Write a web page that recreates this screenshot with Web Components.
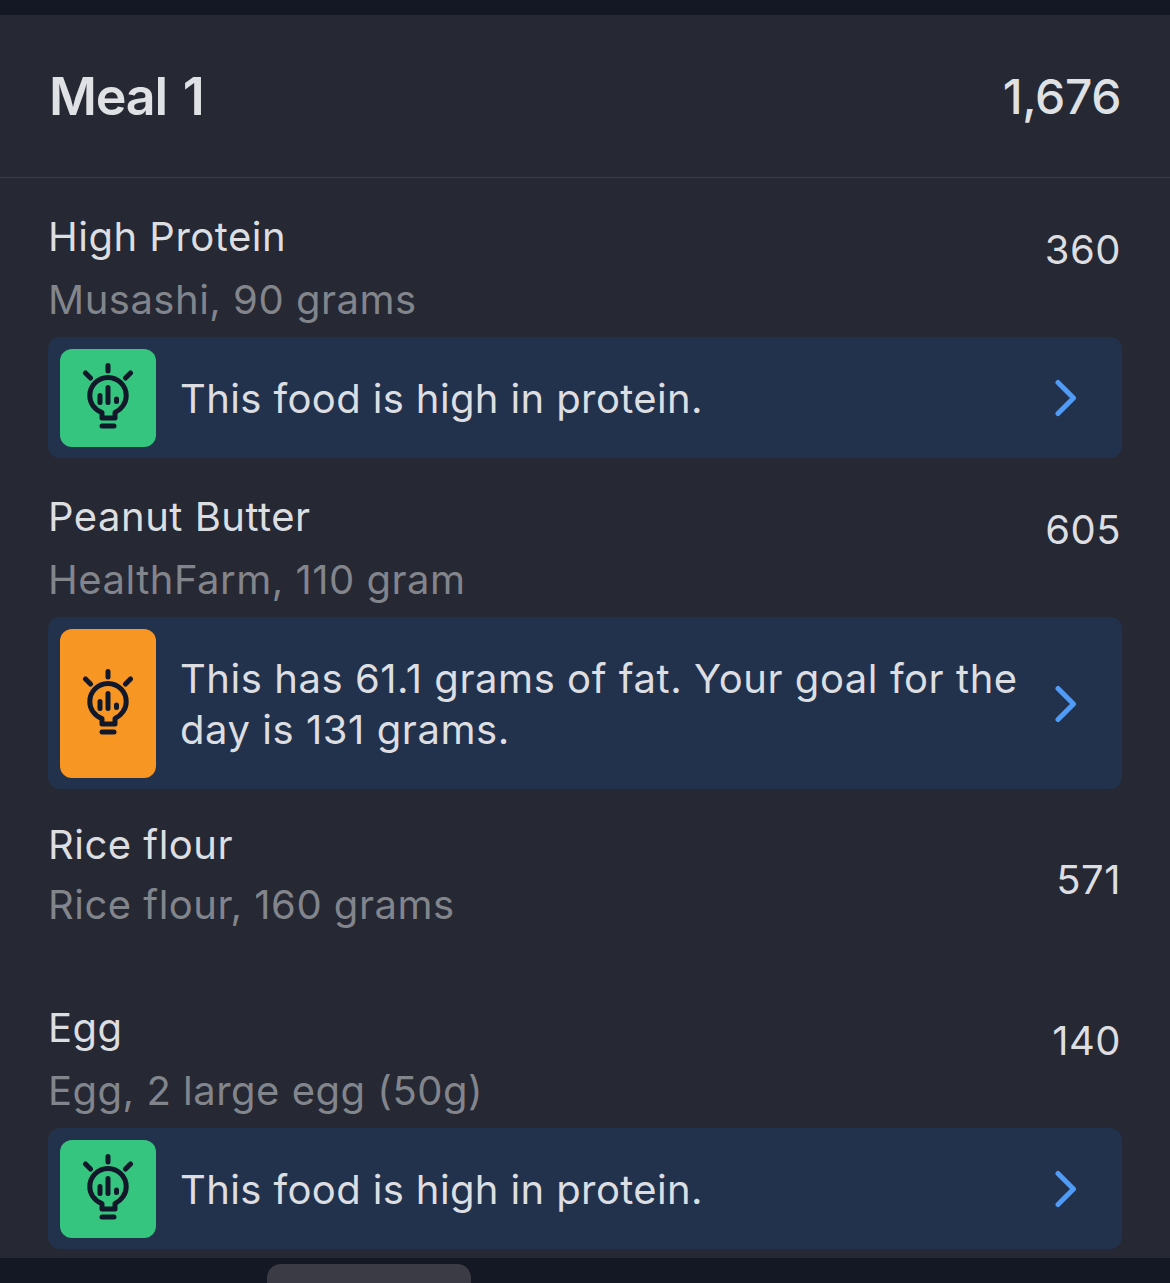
<!DOCTYPE html>
<html>
<head>
<meta charset="utf-8">
<style>
    html,body{margin:0;padding:0;background:#141824;}
    body{font-family:Inter,"Liberation Sans",sans-serif;width:1170px;height:1283px;overflow:hidden;}
</style>
</head>
<body>
<meal-screen>
    <meal-header slot="header" name="Meal 1" total="1,676"></meal-header>
    <food-row name="High Protein" detail="Musashi, 90 grams" cals="360">
        <tip-box kind="green" style="--ls:.38px">This food is high in protein.</tip-box>
    </food-row>
    <food-row name="Peanut Butter" detail="HealthFarm, 110 gram" cals="605" style="--top:30px">
        <tip-box kind="orange">This has 61.1 grams of fat. Your goal for the day is 131 grams.</tip-box>
    </food-row>
    <food-row name="Rice flour" detail="Rice flour, 160 grams" cals="571" plain></food-row>
    <food-row name="Egg" detail="Egg, 2 large egg (50g)" cals="140">
        <tip-box kind="green" style="--ls:.38px">This food is high in protein.</tip-box>
    </food-row>
</meal-screen>
<script>
class MealScreen extends HTMLElement{
    constructor(){
        super()
        this.attachShadow({mode:'open'})
        this.shadowRoot.innerHTML = `
        <style>
            :host{display:flex;flex-direction:column;height:1283px;}
            .top{height:15px;background:#141824;flex:none;}
            .panel{height:1243px;background:#262833;flex:none;overflow:hidden;}
            .bottom{flex:1;background:#141824;display:flex;align-items:flex-start;padding:6px 0 0 267px;}
            .pill{width:204px;height:40px;background:#3a3b45;border-radius:14px;}
        </style>
        <div class="top"></div>
        <div class="panel">
            <slot name="header"></slot>
            <slot></slot>
        </div>
        <div class="bottom"><div class="pill"></div></div>`
    }
}

class MealHeader extends HTMLElement{
    constructor(){
        super()
        this.attachShadow({mode:'open'})
        this.shadowRoot.innerHTML = `
        <style>
            :host{display:flex;justify-content:space-between;align-items:center;height:162px;padding:0 49px;border-bottom:1px solid #3b3d47;color:#dfe1e4;}
            .name{font-size:52px;font-weight:600;letter-spacing:-1.2px;word-spacing:4px;}
            .total{font-size:48px;font-weight:500;letter-spacing:-.4px;}
        </style>
        <div class="name">${this.getAttribute('name')}</div>
        <div class="total">${this.getAttribute('total')}</div>`
    }
}

class FoodRow extends HTMLElement{
    constructor(){
        super()
        this.attachShadow({mode:'open'})
        this.shadowRoot.innerHTML = `
        <style>
            :host{display:block;padding:0 48px;margin-bottom:1px;}
            .head{display:flex;justify-content:space-between;padding:var(--top,31px) 1px 2px 0;}
            .name,.detail,.cals{font-size:40px;letter-spacing:.5px;}
            .name{line-height:56px;color:#dcdee2;}
            .detail{line-height:70px;color:#82858c;}
            .cals{line-height:56px;margin-top:13px;color:#dcdee2;}
            :host([plain]) .head{padding:27px 1px 0 0;height:151px;}
            :host([plain]) .detail{line-height:64px;}
            :host([plain]) .cals{margin-top:35px;}
        </style>
        <div class="head">
            <div>
                <div class="name">${this.getAttribute('name')}</div>
                <div class="detail">${this.getAttribute('detail')}</div>
            </div>
            <div class="cals">${this.getAttribute('cals')}</div>
        </div>
        <slot></slot>`
    }
}

class TipBox extends HTMLElement{
    constructor(){
        super()
        this.attachShadow({mode:'open'})
        const bg = this.getAttribute('kind') == 'orange' ? '#f79622' : '#35c57f'
        this.shadowRoot.innerHTML = `
        <style>
            :host{display:flex;align-items:stretch;background:#23324c;border-radius:12px;padding:12px 45px 11px 12px;}
            .icon{flex:none;width:96px;border-radius:12px;background:${bg};display:flex;align-items:center;justify-content:center;}
            .text{flex:1;margin-left:24px;padding:24px 20px 23px 0;font-size:40px;line-height:51px;color:#dcdee2;letter-spacing:var(--ls,.55px);}
            svg{display:block;flex:none;}
            .arrow{align-self:center;}
        </style>
        <div class="icon">
            <svg width="52" height="70" viewBox="0 0 52 70" fill="none" stroke="#11182a" stroke-width="5" stroke-linecap="round" stroke-linejoin="round">
                <path d="M26 2.500V8M3.500 10L8.500 15M48.500 10L43.500 15"/>
                <path d="M20 55V49.500C12.500 46.500 7.800 40 7.800 32.700A18.200 18.200 0 1 1 44.200 32.700C44.200 40 39.500 46.500 33 49.500V55Z"/>
                <path d="M26 24.500V39.500M18 32.500V39.500M34.500 36V38.500"/>
                <path d="M20 63H32"/>
            </svg>
        </div>
        <div class="text"><slot></slot></div>
        <svg class="arrow" width="24" height="38" viewBox="0 0 24 38" fill="none" stroke="#4f9bf5" stroke-width="5" stroke-linecap="round" stroke-linejoin="round">
            <path d="M5 3.500L20.500 19L5 34.500"/>
        </svg>`
    }
}

customElements.define('meal-screen',MealScreen)
customElements.define('meal-header',MealHeader)
customElements.define('food-row',FoodRow)
customElements.define('tip-box',TipBox)
</script>
</body>
</html>
